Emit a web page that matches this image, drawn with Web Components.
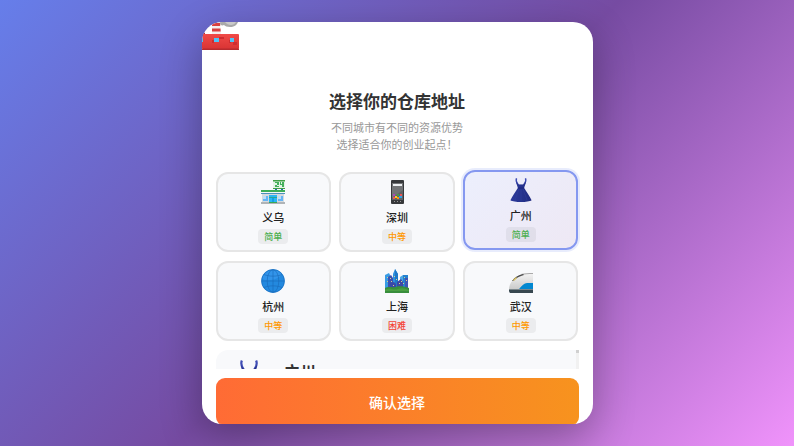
<!DOCTYPE html>
<html lang="zh-CN">
<head>
<meta charset="UTF-8">
<meta name="viewport" content="width=device-width, initial-scale=1.0">
<title>选择你的仓库地址</title>
<style>
    body {
        margin: 0;
        font-family: "Noto Sans", "Noto Sans CJK SC", sans-serif;
        color: #333;
    }
</style>
</head>
<body>
<warehouse-page>
    <warehouse-dialog>
        <city-icon slot="badge" name="factory"></city-icon>
        <span slot="title">选择你的仓库地址</span>
        <span slot="subtitle">不同城市有不同的资源优势<br>选择适合你的创业起点！</span>
        <city-option icon="store" name="义乌" level="easy">简单</city-option>
        <city-option icon="phone" name="深圳" level="medium">中等</city-option>
        <city-option icon="dress" name="广州" level="easy" selected>简单</city-option>
        <city-option icon="globe" name="杭州" level="medium">中等</city-option>
        <city-option icon="skyline" name="上海" level="hard">困难</city-option>
        <city-option icon="train" name="武汉" level="medium">中等</city-option>
        <city-detail slot="detail" icon="dress">广州</city-detail>
        <confirm-button slot="action">确认选择</confirm-button>
    </warehouse-dialog>
</warehouse-page>

<script>
const ICONS = {
    factory: `
        <svg viewBox="0 0 37 28">
            <defs>
                <linearGradient id="f" x1="0" y1="0" x2="0" y2="1">
                    <stop offset="0" stop-color="#f04a47"/><stop offset="1" stop-color="#d93434"/>
                </linearGradient>
            </defs>
            <path d="M16 0h20c-1 3-4 5-8 5-3 0-5-1-6-2-2 1-4 0-6-3z" fill="#a9a9a9"/>
            <path d="M23 0h11c-2 4-8 4-11 0z" fill="#c9c9c9"/>
            <path d="M10 0h8l1 13h-9z" fill="#f3eeee"/>
            <path d="M10 1h8l.2 3H10zM10 6.500h8.500l.2 3H10z" fill="#d9403f"/>
            <path d="M0 10l3 1v3H0z" fill="#b52a2c"/>
            <rect y="12" width="37" height="15" rx="1" fill="url(#f)"/>
            <path d="M0 26.500h37V28H0z" fill="#b82b2e"/>
            <path d="M17 15h5v2h-5zM10 18h2v3h-2zM31 20h4v3h-4zM27 18h2v3h-2z" fill="#cf2c30"/>
            <path d="M0 16h1v4H0zM12 16h5v4h-5zM28 16h4v4h-4z" fill="#4fc3f7"/>
        </svg>`,
    store: `
        <svg viewBox="0 0 24 24">
            <path d="M12 0h12v9H12z" fill="#e4f3e6"/>
            <path d="M12 0h12v1.500H12zM12 8h12v1H12z" fill="#43a047"/>
            <path d="M14 2h4v3h-2v1h2v1h-4V5h2V3h-2zM19 2h1v2h1V2h2v5h-2V5h-2z" fill="#43b05c"/>
            <path d="M14 9h2v2h-2zM20 9h2v2h-2z" fill="#1c6ea4"/>
            <path d="M1 12h22v11H1z" fill="#d5dadd"/>
            <path d="M0 10h24v2H0z" fill="#3cae58"/>
            <path d="M0 12h24v1H0z" fill="#f4f8f9"/>
            <path d="M0 13h24v1H0z" fill="#4d90bd"/>
            <path d="M2 16h5v5H2zM17 16h5v5h-5z" fill="#64b5f6"/>
            <path d="M2 16h3v3H2zM17 16h3v3h-3z" fill="#bbdefb"/>
            <path d="M8 15h8v8H8z" fill="#29b6f6"/>
            <path d="M8 17h8v1H8z" fill="#26a69a"/>
            <path d="M11.500 18h1v5h-1z" fill="#0288d1"/>
            <path d="M0 22h24v2H0z" fill="#b0b4b7"/>
            <path d="M8 22h8v1H8z" fill="#3aa655"/>
        </svg>`,
    phone: `
        <svg viewBox="0 0 24 24">
            <rect x="6" width="13" height="24" rx="1" fill="#37393b"/>
            <path d="M7 3h11v17H7z" fill="#626466"/>
            <path d="M7 3h11v7L7 18z" fill="#727476"/>
            <path d="M8 4h9v2H8z" fill="#eceff1"/>
            <path d="M8 14h2v2H8z" fill="#ab47bc"/><path d="M10 16h2v2h-2z" fill="#ffca28"/>
            <path d="M12 14h2v2h-2z" fill="#43a047"/><path d="M14 16h3v2h-3z" fill="#29a4e8"/>
            <path d="M8 17h2v2H8zM15 14h2v2h-2z" fill="#ef5350"/>
            <path d="M12 17h2v2h-2z" fill="#ff9800"/>
            <path d="M9 21h1v1H9zM12 21h1v1h-1zM15 21h1v1h-1z" fill="#999"/>
        </svg>`,
    dress: `
        <svg viewBox="0 0 24 24">
            <defs>
                <linearGradient id="d">
                    <stop offset="0" stop-color="#2c3a9c"/><stop offset=".5" stop-color="#26338f"/><stop offset="1" stop-color="#202b80"/>
                </linearGradient>
            </defs>
            <path d="M7.500.3C6.600 2.500 7 4 9 6.500M16.500.3c.9 2.200.5 3.700-1.500 6.200" fill="none" stroke="#3f4db5" stroke-width="1.400"/>
            <path d="M7.200 3C8 5.500 10 7 12 6.200c2 .8 4-.7 4.800-3.200.4 2.500-1.100 4.500-1.600 7 2 3.600 5.400 7.800 7.400 12.200-3.100 2.400-18 2.400-21.200 0C3.500 17.800 6.800 13.600 8.800 10 8.300 7.500 6.800 5.500 7.200 3z" fill="url(#d)"/>
            <path d="M9 9.500h6v1H9z" fill="#1a237e"/>
            <path d="M10 11L6 22M12 11v12M14 11l4 11" fill="none" stroke="#33429f" stroke-width=".5"/>
        </svg>`,
    globe: `
        <svg viewBox="0 0 24 24">
            <circle cx="12" cy="12" r="11.700" fill="#2389df"/>
            <path d="M3 5a12 12 0 0 1 18 0c-3 5-13 8-20 5z" fill="#3294ea"/>
            <g fill="none" stroke="#1a69b8" stroke-width=".6">
                <circle cx="12" cy="12" r="11.400"/>
                <ellipse cx="12" cy="12" rx="5.800" ry="11.300"/>
                <path d="M12 .7v22.600M.7 12h22.600M3 5.500c5 2.200 13 2.200 18 0M3 18.500c5-2.200 13-2.200 18 0"/>
            </g>
        </svg>`,
    skyline: `
        <svg viewBox="0 0 24 24">
            <path d="M8 5l2-5 3 5v16H8z" fill="#2f91dd"/>
            <path d="M10 0l3 5v16h-3z" fill="#1f78c8"/>
            <path d="M0 6l4-2 1 2v15H0z" fill="#389ce5"/>
            <path d="M3 8l3-2 2 3v12H3z" fill="#3c50b0"/>
            <path d="M15 8l3-2v15h-3z" fill="#4ba7e7"/>
            <path d="M18 6h5v15h-5z" fill="#2481cf"/>
            <path d="M20 9h3v12h-3z" fill="#3f54b5"/>
            <path d="M12 13l4-3 2 3v8h-6z" fill="#3d47a5"/>
            <path d="M5 14l4-1 2 2v6H5z" fill="#3948a8"/>
            <path d="M2 8h1v1H2zM2 12h1v1H2zM5 9h1v1H5zM6 12h1v1H6zM9 7h1v1H9zM11 10h1v1h-1zM14 14h1v1h-1zM16 12h1v1h-1zM19 8h1v1h-1zM21 11h1v1h-1zM18 14h1v1h-1zM8 16h1v1H8z" fill="#d8ce86"/>
            <path d="M0 19c4-2 7 0 10-1s9-1 14 1v5H0z" fill="#388e3c"/>
            <path d="M0 21c6-3 8 1 13-1s8 0 11 1v1H0z" fill="#4a9f42"/>
        </svg>`,
    train: `
        <svg viewBox="0 0 24 24">
            <defs>
                <linearGradient id="t" x1="0" y1="0" x2="0" y2="1">
                    <stop offset="0" stop-color="#f5f5f5"/><stop offset="1" stop-color="#c8c8c8"/>
                </linearGradient>
            </defs>
            <path d="M24 4v17H0c0-4 1-7 4-10C8 6 13 4 24 4z" fill="url(#t)"/>
            <path d="M24 4v1c-5 0-8 0-11 1l-1-1c4-1 7-1 12-1z" fill="#aaa"/>
            <path d="M3 12c3-4 6-6 11-7l1 1c-4 1-8 3-11 6z" fill="#4c4c4c"/>
            <path d="M4 11l3-3 1 1-3 3z" fill="#d8c060"/>
            <path d="M24 14v7H8c4-1 4-6 10-7z" fill="#0288d1"/>
            <path d="M0 20h24v4H1c-1-1-1-2-1-4z" fill="#37474f"/>
            <path d="M0 20h24v1H0z" fill="#7c878c"/>
        </svg>`
};

class WarehousePage extends HTMLElement {
    constructor() {
        super();
        this.attachShadow({ mode: 'open' }).innerHTML = `
            <style>
                :host {
                    display: flex;
                    align-items: center;
                    justify-content: center;
                    height: 100vh;
                    overflow: hidden;
                    background: linear-gradient(135deg, #667eea 0%, #764ba2 50%, #f093fb 100%);
                }
            </style>
            <slot></slot>
        `;
    }
}

class WarehouseDialog extends HTMLElement {
    constructor() {
        super();
        this.attachShadow({ mode: 'open' }).innerHTML = `
            <style>
                :host {
                    display: flex;
                    flex-direction: column;
                    box-sizing: border-box;
                    width: 92%;
                    max-width: 391px;
                    height: 90vh;
                    overflow: hidden;
                    border-radius: 20px;
                    background: white;
                    box-shadow: 0 14px 42px rgba(0, 0, 0, 0.3);
                }

                header {
                    flex: none;
                    text-align: center;
                    margin-bottom: 19px;
                }

                ::slotted([slot="badge"]) {
                    width: 37px;
                    height: 28px;
                    margin-bottom: 40px;
                }

                h1 {
                    margin: 0 0 5px;
                    font-size: 17px;
                    line-height: 24px;
                    font-weight: 600;
                }

                p {
                    margin: 0;
                    font-size: 11px;
                    line-height: 17px;
                    color: #999;
                }

                .cities {
                    display: grid;
                    grid-template-columns: repeat(3, 1fr);
                    gap: 9px 8px;
                    margin: 0 14px 9px;
                }

                footer {
                    flex: none;
                    margin: 9px 14px 0;
                }
            </style>
            <header>
                <slot name="badge"></slot>
                <h1><slot name="title"></slot></h1>
                <p><slot name="subtitle"></slot></p>
            </header>
            <div class="cities"><slot></slot></div>
            <slot name="detail"></slot>
            <footer><slot name="action"></slot></footer>
        `;
    }
}

class CityIcon extends HTMLElement {
    constructor() {
        super();
        this.attachShadow({ mode: 'open' });
    }

    connectedCallback() {
        this.shadowRoot.innerHTML = `
            <style>
                :host { display: block; width: 24px; height: 24px; }
                svg { display: block; width: 100%; height: 100%; }
            </style>
            ${ICONS[this.getAttribute('name')]}
        `;
    }
}

class CityOption extends HTMLElement {
    constructor() {
        super();
        this.attachShadow({ mode: 'open' });
    }

    connectedCallback() {
        const selected = this.hasAttribute('selected');
        this.shadowRoot.innerHTML = `
            <style>
                :host { display: block; }

                button {
                    display: flex;
                    flex-direction: column;
                    align-items: center;
                    box-sizing: border-box;
                    width: 100%;
                    padding: 6px;
                    border: 2px solid #e6e6e6;
                    border-radius: 12px;
                    background: #f8f9fb;
                    color: #222;
                    font: inherit;
                    cursor: pointer;
                }

                :host([selected]) button {
                    border-color: #8598f0;
                    background: linear-gradient(135deg, #eceffd, #eee8f4);
                    box-shadow: 0 0 0 2px rgba(102, 126, 234, 0.15);
                    transform: translateY(-2px);
                }

                .name {
                    margin: 7px 0 4px;
                    font-size: 11px;
                    line-height: 14px;
                    font-weight: 500;
                }

                .level {
                    padding: 0 6px;
                    border-radius: 4px;
                    background: rgba(0, 0, 0, 0.05);
                    font-size: 9px;
                    line-height: 15px;
                    font-weight: 500;
                }

                .easy { color: #4caf50; }
                .medium { color: #ff9800; }
                .hard { color: #f44336; }
            </style>
            <button type="button" aria-pressed="${selected}">
                <city-icon name="${this.getAttribute('icon')}"></city-icon>
                <span class="name">${this.getAttribute('name')}</span>
                <span class="level ${this.getAttribute('level')}"><slot></slot></span>
            </button>
        `;
    }
}

class CityDetail extends HTMLElement {
    constructor() {
        super();
        this.attachShadow({ mode: 'open' });
    }

    connectedCallback() {
        this.shadowRoot.innerHTML = `
            <style>
                :host {
                    display: flex;
                    flex: none;
                    height: 19px;
                    margin: 0 14px;
                    overflow: hidden;
                }

                .panel {
                    display: flex;
                    flex: 1;
                    align-items: flex-start;
                    gap: 16px;
                    height: 60px;
                    padding: 10px 14px;
                    border-radius: 12px 0 0 12px;
                    background: #f8f9fb;
                }

                city-icon { width: 38px; height: 38px; }

                h2 {
                    margin: 0;
                    font-size: 16px;
                    line-height: 24px;
                    font-weight: 600;
                }

                .track { width: 3px; background: #f1f1f1; }
                .thumb { height: 3px; background: #d0d0d0; }
            </style>
            <div class="panel">
                <city-icon name="${this.getAttribute('icon')}"></city-icon>
                <h2><slot></slot></h2>
            </div>
            <div class="track"><div class="thumb"></div></div>
        `;
    }
}

class ConfirmButton extends HTMLElement {
    constructor() {
        super();
        this.attachShadow({ mode: 'open' }).innerHTML = `
            <style>
                :host { display: block; }

                button {
                    display: block;
                    width: 100%;
                    height: 48px;
                    padding: 0;
                    border: 0;
                    border-radius: 9px;
                    background: linear-gradient(90deg, #ff6b35, #f7931e);
                    color: white;
                    font: inherit;
                    font-size: 14px;
                    font-weight: 500;
                    cursor: pointer;
                }
            </style>
            <button type="button"><slot></slot></button>
        `;
    }
}

customElements.define('city-icon', CityIcon);
customElements.define('city-option', CityOption);
customElements.define('city-detail', CityDetail);
customElements.define('confirm-button', ConfirmButton);
customElements.define('warehouse-dialog', WarehouseDialog);
customElements.define('warehouse-page', WarehousePage);
</script>
</body>
</html>
